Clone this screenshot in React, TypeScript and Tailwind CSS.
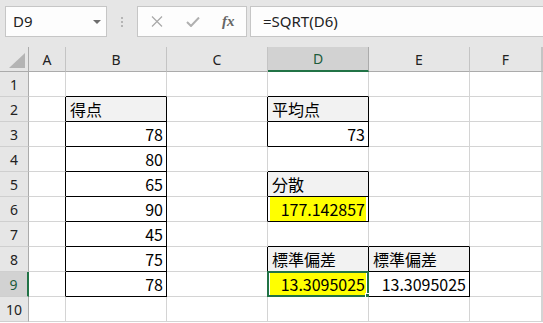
import { Fragment } from "react";

type Cell = { v: string; fill?: "gray" | "yellow"; align?: "left" | "right" };

const cols = ["A", "B", "C", "D", "E", "F", "G"];
const rows = [1, 2, 3, 4, 5, 6, 7, 8, 9, 10];

const data: Record<string, Cell> = {
  B2: { v: "得点", fill: "gray", align: "left" },
  B3: { v: "78" },
  B4: { v: "80" },
  B5: { v: "65" },
  B6: { v: "90" },
  B7: { v: "45" },
  B8: { v: "75" },
  B9: { v: "78" },
  D2: { v: "平均点", fill: "gray", align: "left" },
  D3: { v: "73" },
  D5: { v: "分散", fill: "gray", align: "left" },
  D6: { v: "177.142857", fill: "yellow" },
  D8: { v: "標準偏差", fill: "gray", align: "left" },
  D9: { v: "13.3095025", fill: "yellow" },
  E8: { v: "標準偏差", fill: "gray", align: "left" },
  E9: { v: "13.3095025" },
};

const boxed = (r: number, c: number) => !!data[`${cols[c]}${r}`];

function Toolbar() {
  return (
    <div className="flex h-[47px] items-start bg-[#e6e6e6] pt-[6px]">
      <div className="ml-[5px] flex h-[31px] w-[102px] items-center justify-between border border-[#c6c6c6] bg-[#fdfdfd] pl-[7px] pr-[5px] text-[15px] text-[#222]">
        <span>D9</span>
        <svg width="8" height="4" viewBox="0 0 8 4"><path d="M0 0h8L4 4z" fill="#6d6d6d" /></svg>
      </div>
      <div className="flex h-[31px] w-[30px] flex-col items-center justify-center gap-[2px]">
        <span className="size-[2px] bg-[#b5b5b5]" />
        <span className="size-[2px] bg-[#b5b5b5]" />
        <span className="size-[2px] bg-[#b5b5b5]" />
      </div>
      <div className="flex h-[31px] w-[110px] items-center border border-[#c6c6c6] bg-[#fdfdfd]">
        <svg className="ml-[13px]" width="12" height="11" viewBox="0 0 12 11"><path d="M1 0.5l10 10M11 0.5l-10 10" stroke="#a8a8a8" strokeWidth="1.2" fill="none" /></svg>
        <svg className="ml-[23px]" width="14" height="10" viewBox="0 0 14 10"><path d="M1 5l4 4 8-8.5" stroke="#b0b0b0" strokeWidth="2" fill="none" /></svg>
        <span className="ml-[22px] font-['Liberation_Serif',serif] text-[15px] font-bold italic text-[#666]">fx</span>
      </div>
      <div className="ml-[3px] flex h-[31px] flex-1 items-center border border-r-0 border-[#c6c6c6] bg-[#fdfdfd] pl-[12px] text-[15px] text-[#222]">
        =SQRT(D6)
      </div>
    </div>
  );
}

function DataCell({ r, c }: { r: number; c: number }) {
  const key = `${cols[c]}${r}`;
  const cell = data[key];
  const right = boxed(r, c) || boxed(r, c + 1) ? "border-r-black" : "border-r-[#d4d4d4]";
  const bottom = boxed(r, c) || boxed(r + 1, c) ? "border-b-black" : "border-b-[#d4d4d4]";
  const bg = cell?.fill === "gray" ? "bg-[#f2f2f2]" : "bg-white";
  const align = cell?.align === "left" ? "justify-start pl-[4px]" : "justify-end pr-[3px]";
  return (
    <div className={`relative flex border-r border-b ${right} ${bottom} ${bg}`}>
      {cell?.fill === "yellow" ? (
        <div className="mx-[2px] flex flex-1 items-center justify-end bg-[#ffff00] pr-[1px]">{cell.v}</div>
      ) : cell ? (
        <div className={`flex flex-1 items-center ${align}`}>{cell.v}</div>
      ) : null}
      {key === "D9" ? (
        <>
          <div className="absolute -inset-[1px] border-2 border-[#217346]" />
          <div className="absolute left-[97px] top-[21px] size-[7px] border border-white bg-[#217346]" />
        </>
      ) : null}
    </div>
  );
}

export default function App() {
  return (
    <div className="h-[323px] w-[543px] overflow-hidden bg-white font-['Noto_Sans','Noto_Sans_CJK_JP',sans-serif]">
      <Toolbar />
      <div className="grid grid-cols-[29px_37px_101px_101px_101px_101px_72px_1fr] grid-rows-[25px] auto-rows-[25px] font-['Noto_Sans_CJK_JP',sans-serif] text-[16px] text-black">
        <div className="relative border-r border-b border-r-[#ababab] border-b-[#ababab] bg-[#e6e6e6]">
          <svg className="absolute left-[9px] top-[6px]" width="16" height="15" viewBox="0 0 16 15"><path d="M16 0V15H0z" fill="#b4b4b4" /></svg>
        </div>
        {cols.map((c) =>
          c === "D" ? (
            <div key={c} className="flex items-center justify-center border-r border-b-2 border-r-[#ababab] border-b-[#217346] bg-[#d2d2d2] font-['Noto_Sans',sans-serif] text-[14px] text-[#1d5c3c]">{c}</div>
          ) : (
            <div key={c} className="flex items-center justify-center border-r border-b border-r-[#c4c4c4] border-b-[#ababab] bg-[#e6e6e6] font-['Noto_Sans',sans-serif] text-[14px] text-[#222]">{c === "G" ? "" : c}</div>
          )
        )}
        {rows.map((r) => (
          <Fragment key={r}>
            {r === 9 ? (
              <div className="flex items-center justify-center border-r-2 border-b border-r-[#217346] border-b-[#cfcfcf] bg-[#d2d2d2] font-['Noto_Sans',sans-serif] text-[14px] text-[#1d5c3c]">{r}</div>
            ) : (
              <div className="flex items-center justify-center border-r border-b border-r-[#ababab] border-b-[#cfcfcf] bg-[#e6e6e6] font-['Noto_Sans',sans-serif] text-[14px] text-[#222]">{r}</div>
            )}
            {cols.map((_, c) => (
              <DataCell key={c} r={r} c={c} />
            ))}
          </Fragment>
        ))}
      </div>
    </div>
  );
}
